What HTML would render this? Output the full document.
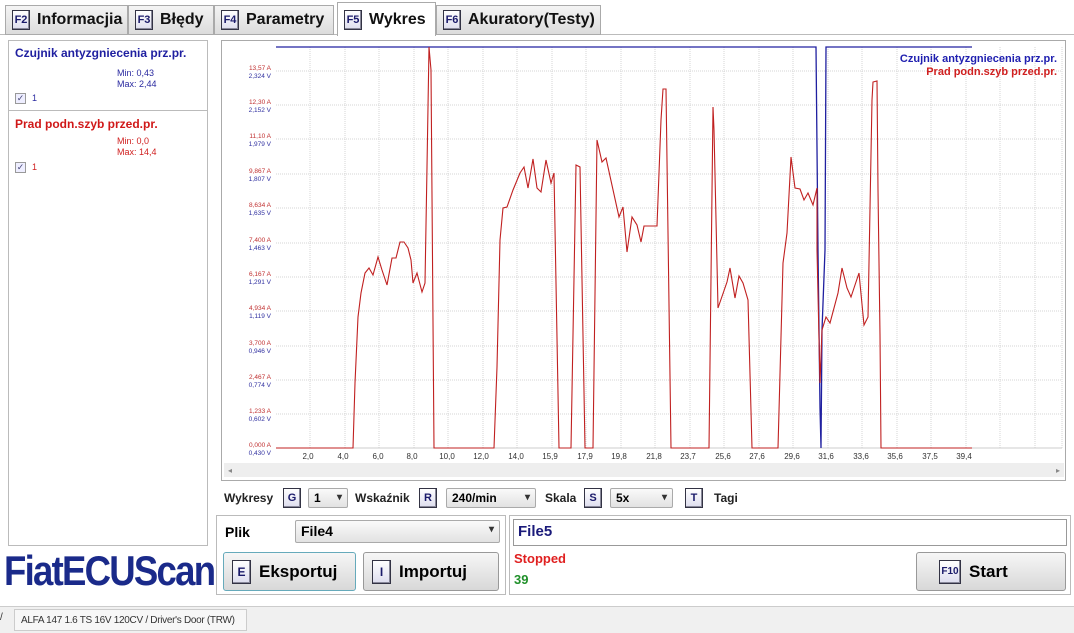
<!DOCTYPE html>
<html><head><meta charset="utf-8"><style>
*{margin:0;padding:0;box-sizing:border-box}
body{width:1074px;height:633px;background:#fff;font-family:"Liberation Sans",sans-serif;position:relative;overflow:hidden}
.a{position:absolute}
.tab{position:absolute;top:5px;height:30px;background:linear-gradient(#f4f4f4,#dcdcdc);border:1px solid #aaa;font-weight:bold;font-size:16px;color:#111;display:flex;align-items:center;padding-left:6px}
.k{display:inline-block;border:1px solid #334;background:linear-gradient(#fff,#dde);color:#1a1a6a;font-weight:bold;font-size:11px;text-align:center;box-shadow:inset -1px -1px 0 #889}
.tab .k{width:18px;height:20px;line-height:18px;margin-right:7px}
.dd{position:absolute;height:20px;border:1px solid #aaa;border-radius:2px;background:linear-gradient(#fafafa,#e2e2e2);font-size:12px;font-weight:bold;padding:2px 5px}
.dd:after{content:"▾";position:absolute;right:5px;top:3px;font-size:10px;color:#333}
.btn{position:absolute;border:1px solid #999;border-radius:3px;background:linear-gradient(#f6f6f6,#d8d8d8);font-weight:bold;font-size:17px;display:flex;align-items:center;padding-left:8px}
.btn .k{width:19px;height:24px;line-height:22px;margin-right:8px;font-size:12px}
.lbl{position:absolute;font-size:12px;font-weight:bold;color:#222}
.sk{position:absolute;width:18px;height:20px;line-height:18px;top:488px}
</style></head><body>
<div class="a" style="left:0;top:0;width:1074px;height:35px;background:#fff;border-bottom:1px solid #bbb"></div>
<div class="tab" style="left:5px;width:123px"><span class="k">F2</span>Informacjia</div>
<div class="tab" style="left:128px;width:86px"><span class="k">F3</span>Błędy</div>
<div class="tab" style="left:214px;width:120px"><span class="k">F4</span>Parametry</div>
<div class="tab" style="left:337px;top:2px;height:34px;width:99px;background:#fff;border-bottom:none"><span class="k">F5</span>Wykres</div>
<div class="tab" style="left:436px;width:165px"><span class="k">F6</span>Akuratory(Testy)</div>

<div class="a" style="left:8px;top:40px;width:200px;height:506px;border:1px solid #bbb"></div>
<div class="a" style="left:8px;top:110px;width:200px;height:1px;background:#bbb"></div>
<div class="a" style="left:15px;top:46px;font-size:12px;font-weight:bold;color:#1f1fa0">Czujnik antyzgniecenia prz.pr.</div>
<div class="a" style="left:117px;top:68px;font-size:9px;color:#2a2aa0;line-height:11px">Min: 0,43<br>Max: 2,44</div>
<div class="a" style="left:15px;top:93px;width:11px;height:11px;border:1px solid #999;background:#eef;font-size:9px;line-height:9px;text-align:center;color:#447">✓</div>
<div class="a" style="left:32px;top:93px;font-size:9px;color:#2a2aa0">1</div>
<div class="a" style="left:15px;top:117px;font-size:12px;font-weight:bold;color:#d01818">Prad podn.szyb przed.pr.</div>
<div class="a" style="left:117px;top:136px;font-size:9px;color:#d02020;line-height:11px">Min: 0,0<br>Max: 14,4</div>
<div class="a" style="left:15px;top:162px;width:11px;height:11px;border:1px solid #999;background:#eef;font-size:9px;line-height:9px;text-align:center;color:#447">✓</div>
<div class="a" style="left:32px;top:162px;font-size:9px;color:#d02020">1</div>

<div class="a" style="left:4px;top:547px;font-size:42px;font-weight:bold;color:#1a2a8a;letter-spacing:-2px;transform:scaleX(0.87);transform-origin:left;font-family:'Liberation Sans Narrow','Liberation Sans',sans-serif">FiatECUScan</div>

<svg class="a" style="left:221px;top:40px" width="846" height="441" viewBox="221 40 846 441">
<rect x="221.5" y="40.5" width="844" height="440" fill="#fff" stroke="#aaa"/>
<g stroke="#d4d4d4" stroke-dasharray="1 1" stroke-width="1">
<line x1="276" y1="71" x2="1062" y2="71"/><line x1="276" y1="105" x2="1062" y2="105"/><line x1="276" y1="139" x2="1062" y2="139"/><line x1="276" y1="174" x2="1062" y2="174"/><line x1="276" y1="208" x2="1062" y2="208"/><line x1="276" y1="243" x2="1062" y2="243"/><line x1="276" y1="277" x2="1062" y2="277"/><line x1="276" y1="311" x2="1062" y2="311"/><line x1="276" y1="346" x2="1062" y2="346"/><line x1="276" y1="380" x2="1062" y2="380"/><line x1="276" y1="414" x2="1062" y2="414"/>
<line x1="310" y1="47" x2="310" y2="448"/><line x1="345" y1="47" x2="345" y2="448"/><line x1="379" y1="47" x2="379" y2="448"/><line x1="414" y1="47" x2="414" y2="448"/><line x1="448" y1="47" x2="448" y2="448"/><line x1="483" y1="47" x2="483" y2="448"/><line x1="517" y1="47" x2="517" y2="448"/><line x1="552" y1="47" x2="552" y2="448"/><line x1="586" y1="47" x2="586" y2="448"/><line x1="621" y1="47" x2="621" y2="448"/><line x1="655" y1="47" x2="655" y2="448"/><line x1="690" y1="47" x2="690" y2="448"/><line x1="724" y1="47" x2="724" y2="448"/><line x1="759" y1="47" x2="759" y2="448"/><line x1="793" y1="47" x2="793" y2="448"/><line x1="828" y1="47" x2="828" y2="448"/><line x1="862" y1="47" x2="862" y2="448"/><line x1="897" y1="47" x2="897" y2="448"/><line x1="931" y1="47" x2="931" y2="448"/><line x1="966" y1="47" x2="966" y2="448"/><line x1="1000" y1="47" x2="1000" y2="448"/><line x1="1035" y1="47" x2="1035" y2="448"/><line x1="1062" y1="47" x2="1062" y2="448"/>
</g>
<line x1="276" y1="448" x2="1062" y2="448" stroke="#ccc"/>
<g font-size="6.5" text-anchor="end" font-family="Liberation Sans">
<g fill="#c03030"><text x="271" y="70">13,57 A</text><text x="271" y="104">12,30 A</text><text x="271" y="138">11,10 A</text><text x="271" y="173">9,867 A</text><text x="271" y="207">8,634 A</text><text x="271" y="242">7,400 A</text><text x="271" y="276">6,167 A</text><text x="271" y="310">4,934 A</text><text x="271" y="345">3,700 A</text><text x="271" y="379">2,467 A</text><text x="271" y="413">1,233 A</text><text x="271" y="447">0,000 A</text></g>
<g fill="#3030a0"><text x="271" y="78">2,324 V</text><text x="271" y="112">2,152 V</text><text x="271" y="146">1,979 V</text><text x="271" y="181">1,807 V</text><text x="271" y="215">1,635 V</text><text x="271" y="250">1,463 V</text><text x="271" y="284">1,291 V</text><text x="271" y="318">1,119 V</text><text x="271" y="353">0,946 V</text><text x="271" y="387">0,774 V</text><text x="271" y="421">0,602 V</text><text x="271" y="455">0,430 V</text></g>
</g>
<g font-size="8" fill="#333" text-anchor="middle" font-family="Liberation Sans"><text x="308" y="459">2,0</text><text x="343" y="459">4,0</text><text x="378" y="459">6,0</text><text x="412" y="459">8,0</text><text x="447" y="459">10,0</text><text x="481" y="459">12,0</text><text x="516" y="459">14,0</text><text x="550" y="459">15,9</text><text x="585" y="459">17,9</text><text x="619" y="459">19,8</text><text x="654" y="459">21,8</text><text x="688" y="459">23,7</text><text x="723" y="459">25,6</text><text x="757" y="459">27,6</text><text x="792" y="459">29,6</text><text x="826" y="459">31,6</text><text x="861" y="459">33,6</text><text x="895" y="459">35,6</text><text x="930" y="459">37,5</text><text x="964" y="459">39,4</text></g>
<polyline fill="none" stroke="#2020a0" stroke-width="1.3" points="276,47 816,47 818,250 820,408 821,448 822,330 825,250 826,47 972,47"/>
<polyline fill="none" stroke="#c02020" stroke-width="1.1" points="276,448 353,448 355,383 358,317 361,293 365,273 369,268 373,275 378,257 382,270 387,285 392,258 396,258 400,242 404,242 408,248 411,260 413,283 417,273 422,292 425,283 427,167 429,47 431,70 434,448 494,448 497,367 500,240 503,208 507,207 513,190 520,173 524,167 528,188 533,159 537,188 541,192 546,160 551,183 554,173 559,448 571,448 576,165 580,167 585,448 593,448 597,140 602,162 606,158 619,217 623,207 627,252 632,217 637,225 641,242 644,226 657,226 661,120 663,89 666,89 671,448 709,448 713,107 714,130 718,308 727,282 730,268 735,298 739,276 743,283 748,300 752,448 778,448 783,263 787,233 791,157 795,188 800,189 804,200 808,193 813,205 817,188 817,250 820,383 822,330 826,317 830,323 838,293 842,268 847,288 851,297 859,273 864,325 868,317 872,100 873,82 877,81 878,190 880,335 881,448 972,448"/>
<text x="1057" y="62" text-anchor="end" font-size="11" font-weight="bold" fill="#2020b0" font-family="Liberation Sans">Czujnik antyzgniecenia prz.pr.</text>
<text x="1057" y="75" text-anchor="end" font-size="11" font-weight="bold" fill="#d02020" font-family="Liberation Sans">Prad podn.szyb przed.pr.</text>
<rect x="224" y="463" width="840" height="14" fill="#eee"/>
<text x="228" y="473" font-size="8" fill="#888">◂</text><text x="1056" y="473" font-size="8" fill="#888">▸</text>
</svg>

<div class="lbl" style="left:224px;top:491px">Wykresy</div>
<span class="k sk" style="left:283px">G</span>
<div class="dd" style="left:308px;top:488px;width:40px">1</div>
<div class="lbl" style="left:355px;top:491px">Wskaźnik</div>
<span class="k sk" style="left:419px">R</span>
<div class="dd" style="left:446px;top:488px;width:90px">240/min</div>
<div class="lbl" style="left:545px;top:491px">Skala</div>
<span class="k sk" style="left:584px">S</span>
<div class="dd" style="left:610px;top:488px;width:63px">5x</div>
<span class="k sk" style="left:685px">T</span>
<div class="lbl" style="left:714px;top:491px">Tagi</div>

<div class="a" style="left:216px;top:515px;width:290px;height:80px;border:1px solid #bbb"></div>
<div class="a" style="left:225px;top:524px;font-size:14px;font-weight:bold">Plik</div>
<div class="dd" style="left:295px;top:520px;width:205px;height:23px;font-size:14px">File4</div>
<div class="btn" style="left:223px;top:552px;width:133px;height:39px;border-color:#6ab"><span class="k">E</span>Eksportuj</div>
<div class="btn" style="left:363px;top:552px;width:136px;height:39px"><span class="k">I</span>Importuj</div>

<div class="a" style="left:509px;top:515px;width:562px;height:80px;border:1px solid #bbb"></div>
<div class="a" style="left:513px;top:519px;width:554px;height:27px;border:1px solid #999;font-size:15px;font-weight:bold;color:#1a1a7a;padding:3px 4px">File5</div>
<div class="a" style="left:514px;top:551px;font-size:13px;font-weight:bold;color:#e02020">Stopped</div>
<div class="a" style="left:514px;top:572px;font-size:13px;font-weight:bold;color:#20902a">39</div>
<div class="btn" style="left:916px;top:552px;width:150px;height:39px;padding-left:22px"><span class="k" style="width:22px;font-size:10px">F10</span>Start</div>

<div class="a" style="left:0;top:606px;width:1074px;height:27px;background:#f0f0f0;border-top:1px solid #ccc"></div>
<div class="a" style="left:0;top:612px;font-size:10px;color:#333">/</div>
<div class="a" style="left:14px;top:609px;width:233px;height:22px;border:1px solid #ccc;background:#f7f7f7;font-size:10px;color:#333;padding:5px 6px;letter-spacing:-0.3px">ALFA 147 1.6 TS 16V 120CV / Driver's Door (TRW)</div>
</body></html>
